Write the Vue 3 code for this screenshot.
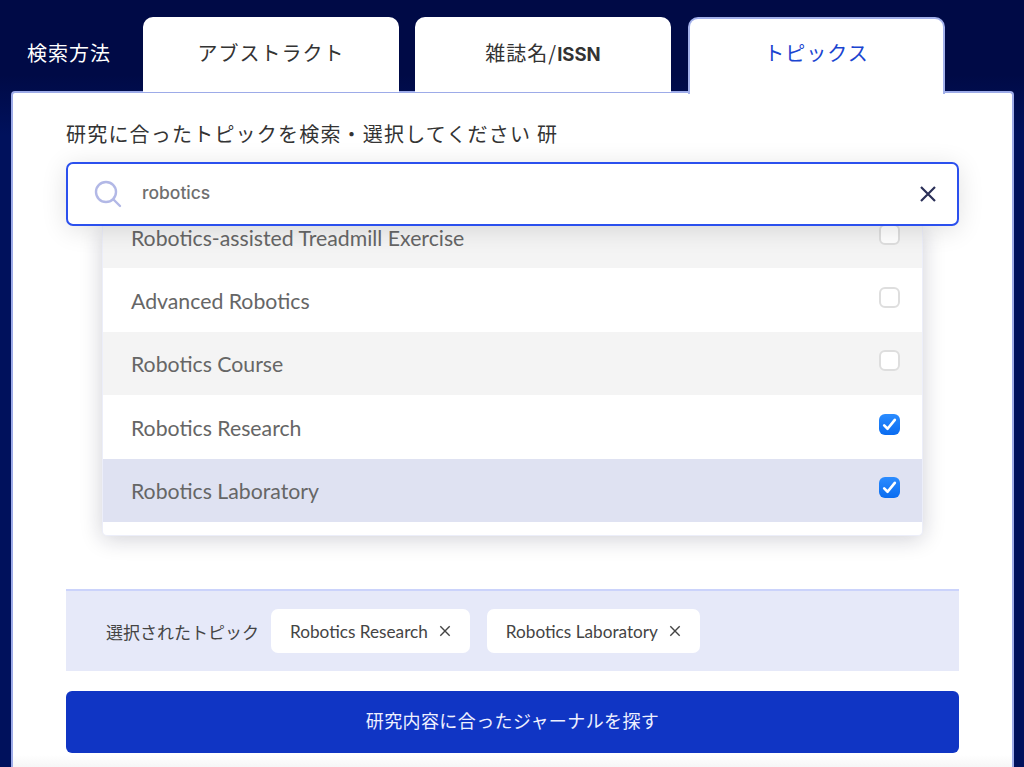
<script setup>
const tabs = [
  { label: 'アブストラクト' },
  { label: '雑誌名/', strong: 'ISSN' },
  { label: 'トピックス', active: true },
]
const rows = [
  { name: 'Robotics-assisted Treadmill Exercise', tone: 'gray', checked: false },
  { name: 'Advanced Robotics', tone: 'white', checked: false },
  { name: 'Robotics Course', tone: 'gray', checked: false },
  { name: 'Robotics Research', tone: 'white', checked: true },
  { name: 'Robotics Laboratory', tone: 'lav', checked: true },
]
const chips = ['Robotics Research', 'Robotics Laboratory']
</script>

<template>
  <div class="page">
    <nav class="tabbar">
      <span class="method">検索方法</span>
      <div v-for="t in tabs" :key="t.label" class="tab" :class="{ active: t.active }">
        {{ t.label }}<b v-if="t.strong">{{ t.strong }}</b>
      </div>
    </nav>
    <main class="panel">
      <p class="prompt">研究に合ったトピックを検索・選択してください 研</p>
      <div class="field">
        <div class="input">
          <svg class="search" width="28" height="28" viewBox="0 0 28 28" fill="none" stroke="#b2b8e6" stroke-width="2.4" stroke-linecap="round">
            <circle cx="12" cy="12" r="10" />
            <path d="M19.5 19.5l6.5 6.5" />
          </svg>
          <span class="query">robotics</span>
          <svg class="clear" width="18" height="18" viewBox="0 0 18 18" fill="none" stroke="#2b3058" stroke-width="2.2">
            <path d="M2 2l14 14M16 2L2 16" />
          </svg>
        </div>
        <div class="menu">
          <ul class="list">
            <li v-for="r in rows" :key="r.name" class="row" :class="r.tone">
              <span class="name">{{ r.name }}</span>
              <span class="box" :class="{ on: r.checked }">
                <svg v-if="r.checked" width="17" height="17" viewBox="0 0 16 16" fill="none" stroke="#fff" stroke-width="2.5" stroke-linecap="round" stroke-linejoin="round">
                  <path d="M3 8.8l3.2 3.2L13 3.6" />
                </svg>
              </span>
            </li>
          </ul>
        </div>
      </div>
      <section class="selected">
        <span class="sel-label">選択されたトピック</span>
        <div v-for="c in chips" :key="c" class="chip">
          <span>{{ c }}</span>
          <svg width="12" height="12" viewBox="0 0 12 12" fill="none" stroke="#444" stroke-width="1.4">
            <path d="M1.3 1.3l9.4 9.4M10.7 1.3l-9.4 9.4" />
          </svg>
        </div>
      </section>
      <button class="cta">研究内容に合ったジャーナルを探す</button>
    </main>
  </div>
</template>

<style>
html, body { margin: 0; background: #000b49; }
</style>

<style scoped>
.page {
  width: 1024px;
  height: 767px;
  overflow: hidden;
  box-sizing: border-box;
  padding-top: 17px;
  background: linear-gradient(#000a46 75px, #00115c 135px);
  font-family: "Noto Sans CJK JP", sans-serif;
}
.tabbar {
  display: flex;
  height: 75px;
  padding-left: 27px;
  position: relative;
  z-index: 1;
}
.method {
  width: 116px;
  padding-top: 21px;
  font-size: 20px;
  letter-spacing: 1px;
  line-height: 30px;
  color: #fff;
}
.tab {
  box-sizing: border-box;
  width: 256px;
  height: 75px;
  margin-right: 16px;
  padding-top: 21px;
  background: #fff;
  border-radius: 10px 10px 0 0;
  text-align: center;
  font-size: 20px;
  letter-spacing: 1px;
  line-height: 30px;
  color: #333;
}
.tab b {
  font-family: Inter, sans-serif;
  font-weight: 700;
  font-size: 18.5px;
  letter-spacing: 0;
}
.tab.active {
  width: 257px;
  height: 77px;
  margin-left: 1px;
  margin-right: 0;
  border: 2px solid #a2b0ea;
  border-bottom: 0;
  padding-top: 19px;
  color: #1a44d0;
}
.panel {
  box-sizing: border-box;
  width: 1003px;
  height: 676px;
  margin-left: 11px;
  margin-top: -1px;
  padding: 0 53px;
  background: linear-gradient(#fff 662px, #f6f6f6);
  border: 2px solid #9dabe8;
  border-bottom: 0;
  border-radius: 4px 4px 0 0;
}
.prompt {
  margin: 0;
  padding-top: 26px;
  height: 43px;
  font-size: 20px;
  letter-spacing: 1.2px;
  line-height: 30px;
  color: #333;
}
.field {
  position: relative;
  width: 893px;
}
.input {
  position: relative;
  z-index: 2;
  box-sizing: border-box;
  display: flex;
  align-items: center;
  height: 64px;
  padding: 0 20px 0 26px;
  background: #fff;
  border: 2px solid #2b50ee;
  border-radius: 7px;
  box-shadow: 0 4px 26px rgba(0, 0, 0, 0.12);
}
.search { flex: none; }
.query {
  flex: 1;
  margin-left: 20px;
  padding-bottom: 3px;
  font-family: Inter, sans-serif;
  font-weight: 500;
  font-size: 17.5px;
  color: #6f6f6f;
}
.clear { flex: none; }
.menu {
  box-sizing: border-box;
  position: absolute;
  left: 36px;
  top: 64px;
  width: 821px;
  height: 310px;
  overflow: hidden;
  background: #fff;
  border: 1px solid #eceef9;
  border-top: 0;
  border-radius: 0 0 5px 5px;
  box-shadow: 0 3px 22px rgba(20, 20, 50, 0.2);
}
.list {
  list-style: none;
  margin: -21px 0 0;
  padding: 0;
}
.row {
  box-sizing: border-box;
  display: flex;
  align-items: center;
  justify-content: space-between;
  height: 63.4px;
  padding: 0 22px 0 28px;
  font-family: Lato, sans-serif;
  font-size: 21.25px;
  color: #666;
}
.row.gray { background: #f4f4f4; }
.row.white { background: #fff; }
.row.lav { background: #dfe2f2; }
.name { padding-top: 2px; }
.box {
  box-sizing: border-box;
  display: flex;
  align-items: center;
  justify-content: center;
  width: 21px;
  height: 21px;
  margin-top: -5px;
  background: #fff;
  border: 2px solid #dedede;
  border-radius: 6px;
}
.box.on {
  border: 0;
  background: linear-gradient(#2b8cff, #0a6cf0);
}
.selected {
  box-sizing: border-box;
  display: flex;
  align-items: center;
  height: 82px;
  margin-top: 363px;
  padding: 0 0 0 40px;
  background: #e6e9f9;
  border-top: 2px solid #cbd3fb;
}
.sel-label {
  width: 165px;
  font-size: 17px;
  color: #444;
}
.chip {
  box-sizing: border-box;
  display: flex;
  align-items: center;
  justify-content: space-between;
  height: 44px;
  margin-right: 17px;
  padding: 0 19px;
  gap: 11px;
  background: #fff;
  border-radius: 7px;
  font-family: Lato, sans-serif;
  font-size: 17.2px;
  color: #444;
}
.cta {
  display: block;
  width: 893px;
  height: 62px;
  margin-top: 20px;
  padding: 0 0 5px;
  border: 0;
  border-radius: 6px;
  background: #1035c4;
  color: #eef0ff;
  font-family: "Noto Sans CJK JP", sans-serif;
  font-size: 18px;
  letter-spacing: 0.4px;
}
</style>
